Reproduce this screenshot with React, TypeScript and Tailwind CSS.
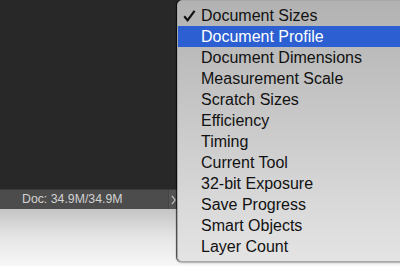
const items = [
  'Document Sizes',
  'Document Profile',
  'Document Dimensions',
  'Measurement Scale',
  'Scratch Sizes',
  'Efficiency',
  'Timing',
  'Current Tool',
  '32-bit Exposure',
  'Save Progress',
  'Smart Objects',
  'Layer Count',
]

const App = () => {
  return (
    <div className="relative w-[400px] h-[266px] overflow-hidden flex flex-col font-['Liberation_Sans',Arial,sans-serif]">
      {/* Canvas */}
      <div className="h-[189px] bg-[#282828]" />

      {/* Status bar */}
      <div className="h-[20px] flex bg-[#4c4c4c] border-t border-[#3a3a3a]">
        <div className="w-[168px] pl-[22px] flex items-center text-[12.3px] text-[#d2d2d2]">
          Doc: 34.9M/34.9M
        </div>
        <div className="w-[10px] flex items-center justify-center bg-[#535353] border-l border-[#444]">
          <svg width="5" height="10" viewBox="0 0 5 10" fill="none">
            <path d="M0.8 0.8 L4.2 5 L0.8 9.2" stroke="#c8c8c8" strokeWidth="1.1" />
          </svg>
        </div>
        <div className="flex-1" />
      </div>

      {/* Below window */}
      <div className="flex-1 bg-gradient-to-b from-[#c4c4c4] via-[#e6e6e6] to-[#f7f7f7]" />

      {/* Popup menu */}
      <div className="absolute left-[177px] top-0 w-[240px] h-[262px] rounded-[5px] py-[4px] bg-gradient-to-b from-[#b2b2b2] to-[#e4e4e4] border border-[#a8a8a8] shadow-[-1px_0_1px_rgba(0,0,0,0.7),0_1px_2px_rgba(0,0,0,0.25)]">
        {items.map((item, i) => (
          <div
            key={item}
            className={`relative h-[21px] pl-[23px] flex items-center text-[16px] leading-none ${
              i === 1 ? 'bg-[#2c60d2] text-white' : 'text-[#111]'
            }`}
          >
            {i === 0 && (
              <svg className="absolute left-[5px] top-[5px]" width="13" height="12" viewBox="0 0 13 12" fill="none">
                <path d="M1.2 6.2 L4.6 10.2 L11.6 0.8" stroke="#111" strokeWidth="2.1" />
              </svg>
            )}
            {item}
          </div>
        ))}
      </div>
    </div>
  )
}

export default App
